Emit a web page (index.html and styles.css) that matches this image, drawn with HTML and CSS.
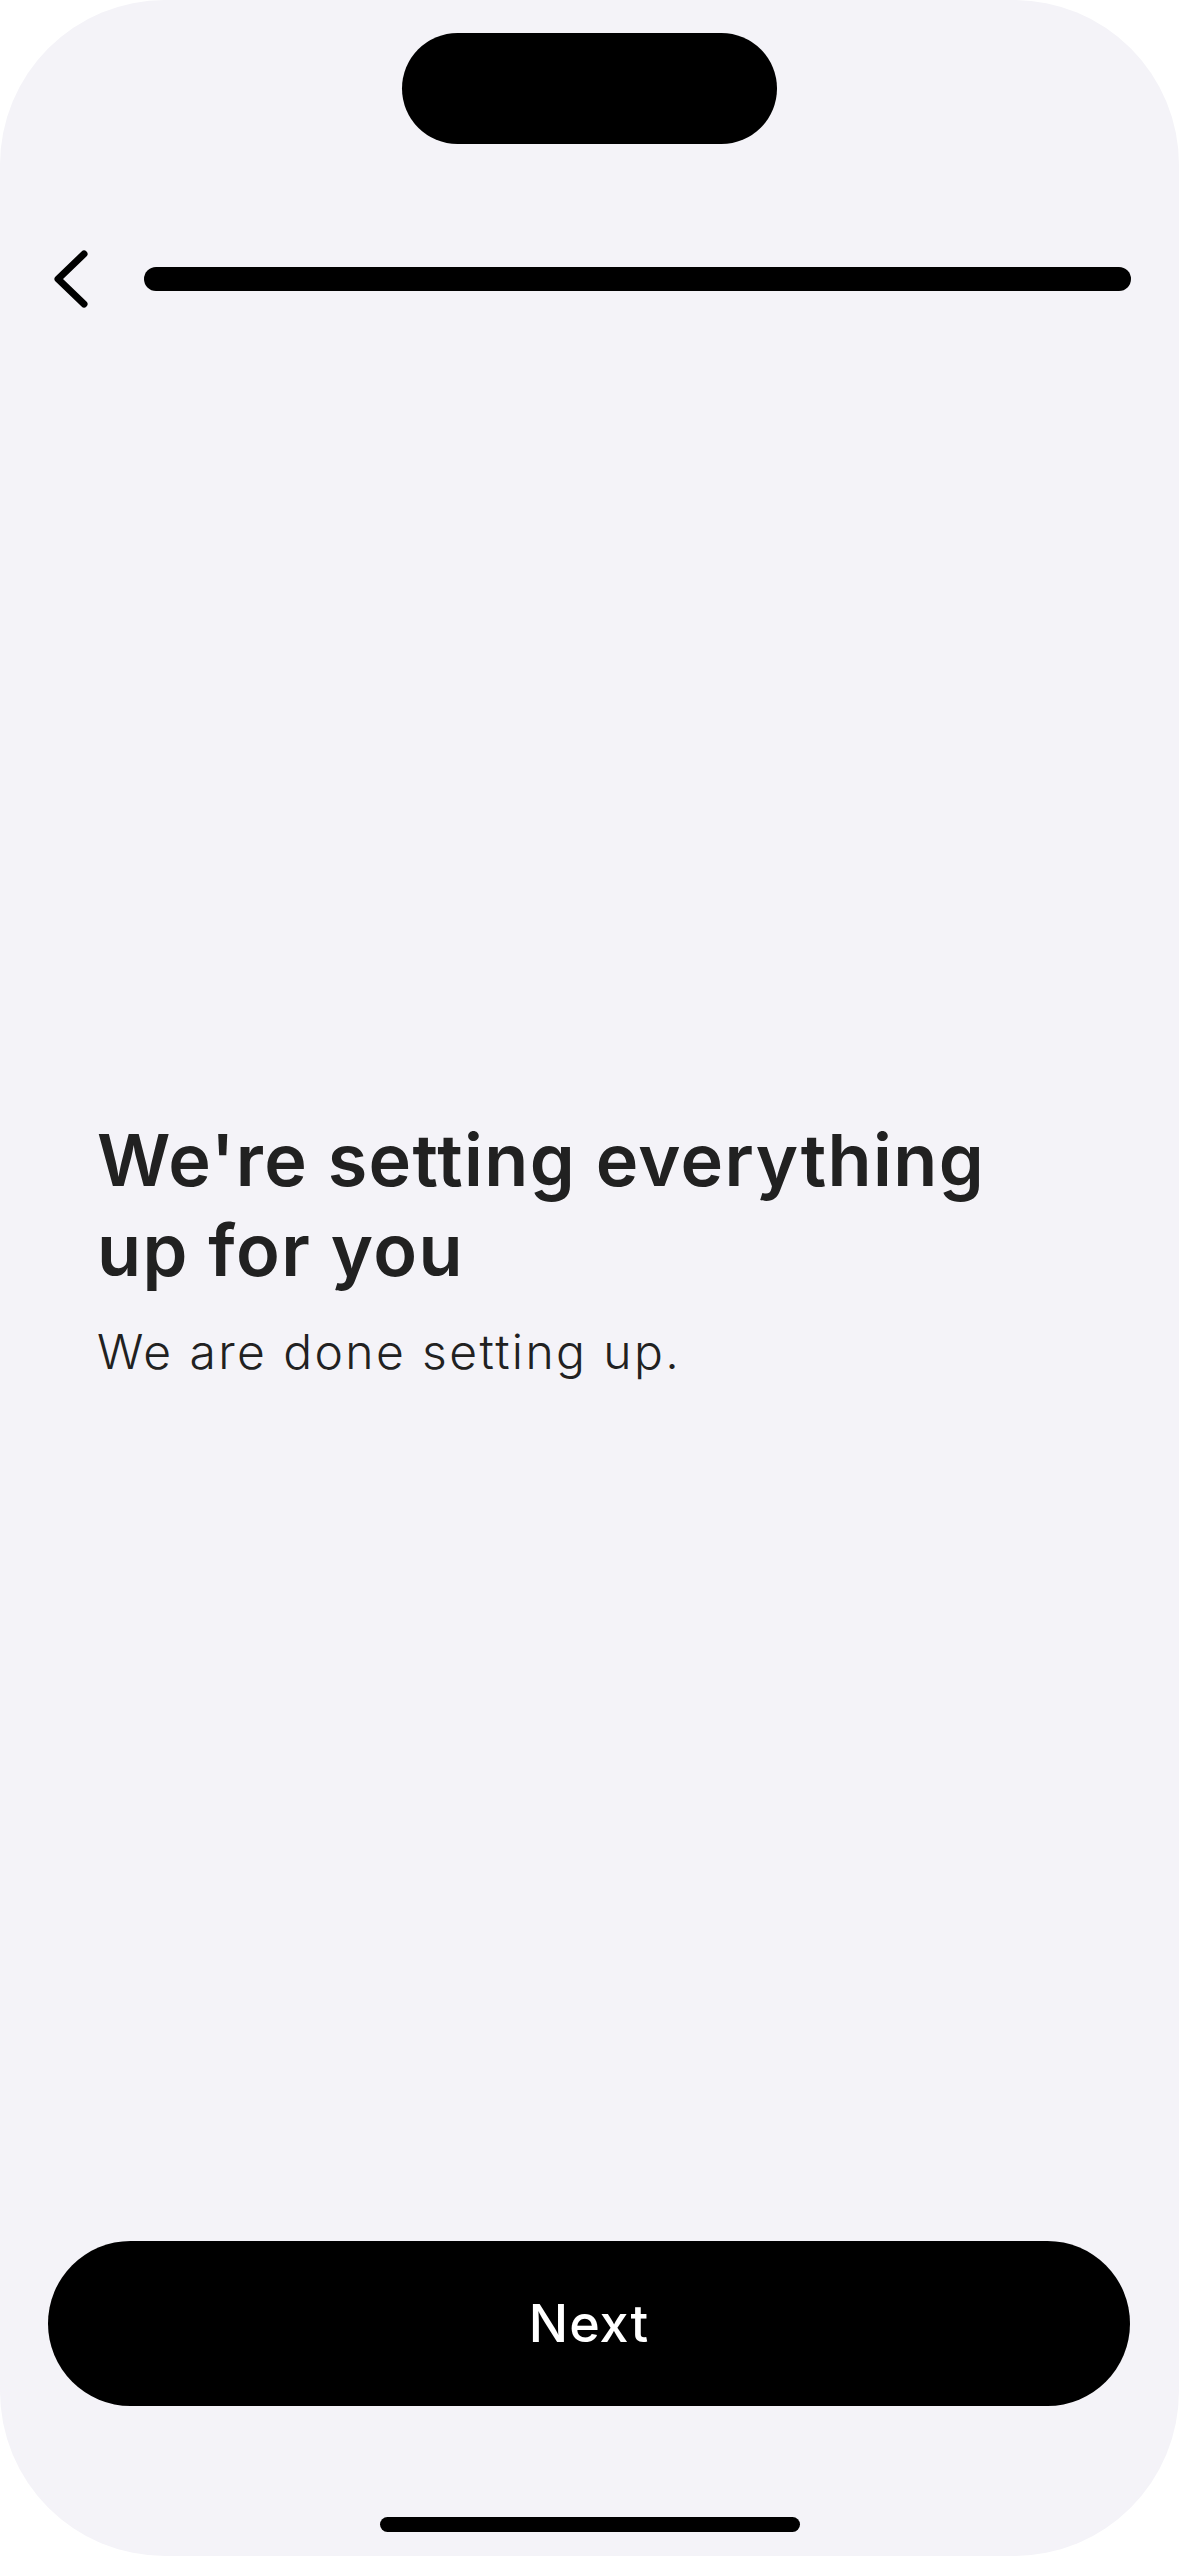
FILE: index.html
```html
<!DOCTYPE html>
<html lang="en">
<head>
<meta charset="utf-8">
<title>Setup</title>
<link rel="stylesheet" href="styles.css">
</head>
<body>
<div class="screen">
  <div class="notch"></div>
  <header class="header">
    <svg class="back" width="40" height="60" viewBox="0 0 40 60" aria-label="Back">
      <path d="M34 5 L8 30 L34 55" fill="none" stroke="#000" stroke-width="7" stroke-linecap="round" stroke-linejoin="round"/>
    </svg>
    <div class="progress"></div>
  </header>
  <main class="content">
    <h1 class="title">We're setting everything<br>up for you</h1>
    <p class="subtitle">We are done setting up.</p>
  </main>
  <footer class="footer">
    <button class="next">Next</button>
    <div class="home"></div>
  </footer>
</div>
</body>
</html>
```
FILE: styles.css
```css
html, body {
  margin: 0;
  padding: 0;
  background: #ffffff;
}
.screen {
  width: 1179px;
  height: 2556px;
  background: #f4f3f8;
  border-radius: 165px;
  display: flex;
  flex-direction: column;
  align-items: stretch;
  overflow: hidden;
  font-family: Inter, "Noto Sans", sans-serif;
}
.notch {
  align-self: center;
  margin-top: 33px;
  width: 375px;
  height: 111px;
  border-radius: 56px;
  background: #000;
}
.header {
  margin-top: 105px;
  height: 60px;
  display: flex;
  align-items: center;
  padding: 0 48px 0 50px;
  gap: 54px;
}
.back {
  flex: none;
  display: block;
}
.progress {
  flex: 1;
  height: 24px;
  border-radius: 12px;
  background: #000;
}
.content {
  flex: 1;
  padding: 0 60px 54px 97px;
  display: flex;
  flex-direction: column;
  justify-content: center;
}
.title {
  margin: 0;
  font-size: 72px;
  line-height: 90px;
  font-weight: 600;
  color: #212121;
  letter-spacing: 1.4px;
}
.subtitle {
  margin: 27px 0 0 0;
  font-size: 48px;
  line-height: 60px;
  font-weight: 300;
  color: #212121;
  letter-spacing: 2.4px;
}
.footer {
  display: flex;
  flex-direction: column;
  align-items: center;
}
.next {
  width: 1082px;
  height: 165px;
  margin-left: -1px;
  border: none;
  border-radius: 83px;
  background: #000;
  color: #fff;
  font-family: Inter, "Noto Sans", sans-serif;
  font-size: 52px;
  font-weight: 500;
  letter-spacing: 1px;
  padding: 0;
}
.home {
  margin-top: 111px;
  margin-bottom: 24px;
  width: 420px;
  height: 15px;
  border-radius: 8px;
  background: #000;
}
```
